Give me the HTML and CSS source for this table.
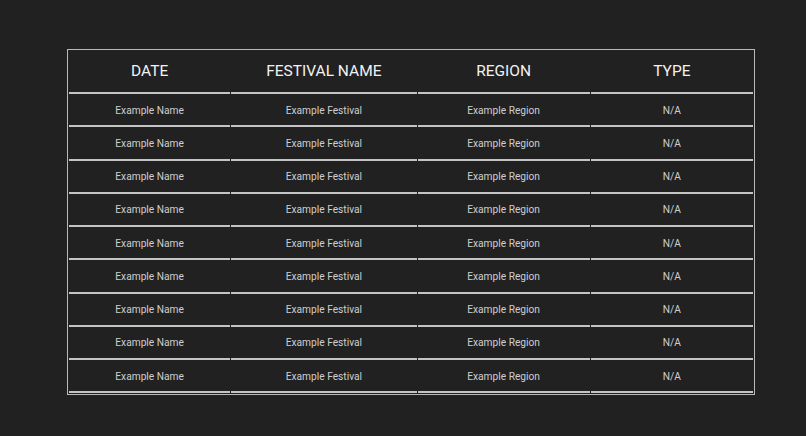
FILE: index.html
```html
<!DOCTYPE html>
<html>
<head>
<meta charset="utf-8">
<link rel="stylesheet" href="styles.css">
</head>
<body>
<table class="fest">
  <thead>
    <tr><th class="c1">DATE</th><th class="c2">FESTIVAL NAME</th><th class="c3">REGION</th><th class="c4">TYPE</th></tr>
  </thead>
  <tbody>
    <tr><td>Example Name</td><td>Example Festival</td><td>Example Region</td><td>N/A</td></tr>
    <tr><td>Example Name</td><td>Example Festival</td><td>Example Region</td><td>N/A</td></tr>
    <tr><td>Example Name</td><td>Example Festival</td><td>Example Region</td><td>N/A</td></tr>
    <tr><td>Example Name</td><td>Example Festival</td><td>Example Region</td><td>N/A</td></tr>
    <tr><td>Example Name</td><td>Example Festival</td><td>Example Region</td><td>N/A</td></tr>
    <tr><td>Example Name</td><td>Example Festival</td><td>Example Region</td><td>N/A</td></tr>
    <tr><td>Example Name</td><td>Example Festival</td><td>Example Region</td><td>N/A</td></tr>
    <tr><td>Example Name</td><td>Example Festival</td><td>Example Region</td><td>N/A</td></tr>
    <tr><td>Example Name</td><td>Example Festival</td><td>Example Region</td><td>N/A</td></tr>
  </tbody>
</table>
</body>
</html>
```
FILE: styles.css
```css
html, body {
  margin: 0;
  padding: 0;
  background: #212121;
}
body {
  padding: 49px 0 0 67px;
  font-family: Roboto, "Liberation Sans", sans-serif;
}
.fest {
  width: 688px;
  border: 1px solid #b9b9b9;
  border-collapse: separate;
  border-spacing: 1px 0;
  padding-bottom: 1px;
}
.fest th, .fest td {
  text-align: center;
  padding: 0;
  border-bottom: 2px solid #c4c4c4;
}
.fest th {
  height: 42px;
  color: #f2f2f2;
  font-size: 15.5px;
  font-weight: 400;
}
.fest td {
  height: 30.25px;
  padding-top: 1px;
  color: #cfcfcf;
  font-size: 10.2px;
}
.c1 { width: 161px; }
.c2 { width: 185px; }
.c3 { width: 172px; }
.c4 { width: 162px; }
```
